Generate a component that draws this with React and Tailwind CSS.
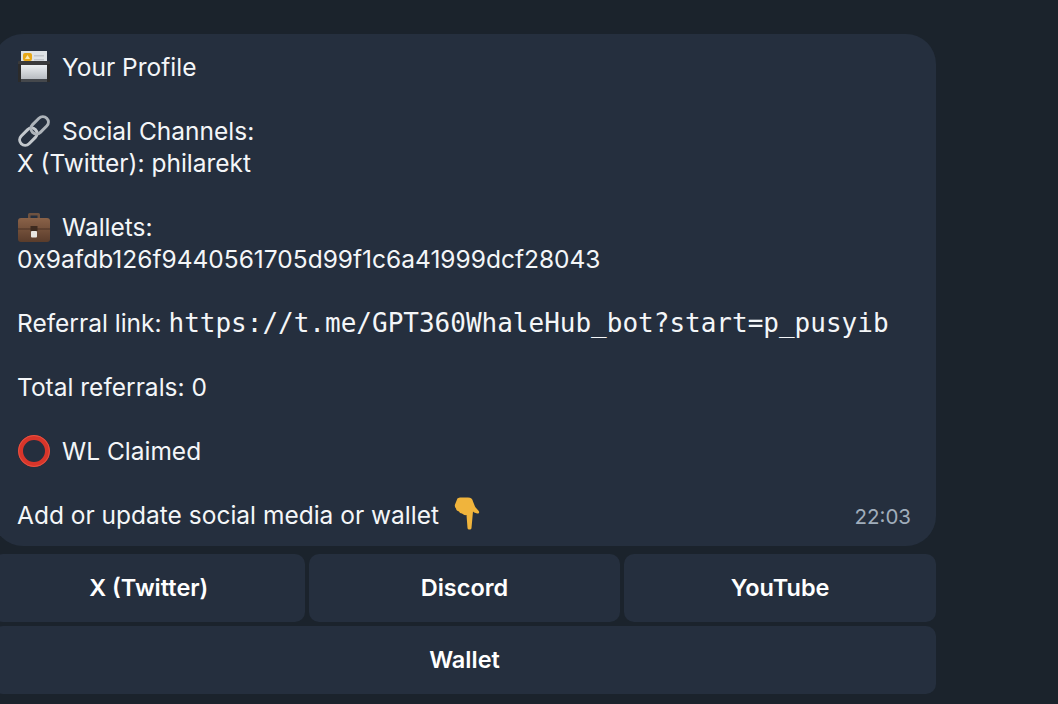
import React from "react";

const PrinterEmoji = () => (
  <svg width="34" height="34" viewBox="0 0 34 34" className="shrink-0">
    <defs>
      <linearGradient id="fax" x1="0" y1="0" x2="0" y2="1">
        <stop offset="0" stopColor="#eceff1" />
        <stop offset="1" stopColor="#b4b8bd" />
      </linearGradient>
    </defs>
    <rect x="4" y="1" width="26" height="14" fill="#dfe3e6" />
    <rect x="6" y="3" width="9" height="8" rx="2" fill="#e8a818" />
    <path d="M8 9l2.5-4 2.5 4z" fill="#fbe9b0" />
    <rect x="17" y="5" width="10" height="1.5" fill="#c2c6ca" />
    <rect x="17" y="9" width="10" height="1.5" fill="#c2c6ca" />
    <rect x="1" y="11" width="32" height="4" rx="1" fill="#3a3a3a" />
    <rect x="3" y="15" width="28" height="15" fill="url(#fax)" />
    <rect x="3" y="29" width="28" height="3" fill="#45484c" />
    <rect x="1" y="14" width="3" height="18" fill="#2b2b2b" />
    <rect x="30" y="14" width="3" height="18" fill="#2b2b2b" />
  </svg>
);

const LinkEmoji = () => (
  <svg width="34" height="34" viewBox="0 0 34 34" fill="none" className="shrink-0">
    <g transform="rotate(-45 17 17)" stroke="#aeb4ba" strokeWidth="3">
      <rect x="-1" y="11.5" width="20" height="11" rx="5.5" stroke="#c3c8cd" />
      <rect x="15" y="11.5" width="20" height="11" rx="5.5" />
    </g>
  </svg>
);

const BriefcaseEmoji = () => (
  <svg width="34" height="34" viewBox="0 0 34 34" className="shrink-0">
    <defs>
      <linearGradient id="case" x1="0" y1="0" x2="0" y2="1">
        <stop offset="0" stopColor="#8a6248" />
        <stop offset="1" stopColor="#5a3c2b" />
      </linearGradient>
    </defs>
    <path d="M11 8V4.5A1.5 1.5 0 0 1 12.5 3h9A1.5 1.5 0 0 1 23 4.5V8h-2.5V5.5h-7V8z" fill="#6e5240" />
    <rect x="1" y="8" width="32" height="24" rx="3" fill="url(#case)" />
    <path d="M1 19h32" stroke="#4a3124" strokeWidth="1" />
    <rect x="13.5" y="16" width="7" height="5" fill="#3d2a1f" />
    <rect x="14" y="21" width="6" height="6.5" rx="1" fill="#e9e6e1" />
  </svg>
);

const CircleEmoji = () => (
  <svg width="34" height="34" viewBox="0 0 34 34" fill="none" className="shrink-0">
    <circle cx="17" cy="17" r="13.5" stroke="#d8352a" strokeWidth="5" />
    <circle cx="17" cy="17" r="15.5" stroke="#e85a48" strokeWidth="0.8" />
  </svg>
);

const HandEmoji = () => (
  <svg width="28" height="34" viewBox="0 0 28 34" className="shrink-0">
    <path
      d="M4 2.5C4 1 6 .5 9 .5h6c3 0 4.500 1.500 5 4l2 5c1 2 3 3 4 5 .6 1.300-.5 2.500-2 2-1.500-.5-3-1-4-2l-1.500 16.500c-.2 2-3.800 2-4 0L13.500 18c-2 .5-3.500-.5-4.500-1.500-1.500 0-2.500-1-3-2C4.500 14 3 13 3 11.500 2 10.500 1.500 9 2 7.500z"
      fill="#f0b43c"
    />
  </svg>
);

const Line = ({ icon, children }) => (
  <div className="flex h-8 items-center whitespace-nowrap">
    {icon && <span className="mr-[10px] flex w-[35px] justify-start">{icon}</span>}
    <span>{children}</span>
  </div>
);

const KeyButton = ({ label }) => (
  <button className="flex h-[68px] flex-1 items-center justify-center rounded-[10px] bg-[#252f3e] text-[23.5px] font-semibold text-white">
    {label}
  </button>
);

export default function App() {
  return (
    <div className="h-[704px] w-[1058px] overflow-hidden bg-[#1b232c] pt-[34px] font-['Inter',sans-serif] text-white">
      <div className="ml-[-7px] w-[943px]">
        <div className="relative rounded-[30px] bg-[#252f3e] pb-[15px] pl-6 pt-[17px] text-[24.5px] leading-8 text-[#f4f6f8]">
          <Line icon={<PrinterEmoji />}>Your Profile</Line>
          <div className="h-8" />
          <Line icon={<LinkEmoji />}>Social Channels:</Line>
          <Line>X (Twitter): philarekt</Line>
          <div className="h-8" />
          <Line icon={<BriefcaseEmoji />}>Wallets:</Line>
          <Line>0x9afdb126f9440561705d99f1c6a41999dcf28043</Line>
          <div className="h-8" />
          <Line>
            Referral link:{" "}
            <span className="font-['DejaVu_Sans_Mono',monospace] text-[26px]">
              https://t.me/GPT360WhaleHub_bot?start=p_pusyib
            </span>
          </Line>
          <div className="h-8" />
          <Line>Total referrals: 0</Line>
          <div className="h-8" />
          <Line icon={<CircleEmoji />}>WL Claimed</Line>
          <div className="h-8" />
          <div className="flex h-8 items-center whitespace-nowrap">
            <span>Add or update social media or wallet</span>
            <span className="ml-[14px] mt-[-2px]">
              <HandEmoji />
            </span>
          </div>
          <span className="absolute bottom-[15px] right-[25px] text-[20.5px] leading-7 text-[#a0adbb]">22:03</span>
        </div>
        <div className="mt-2 flex gap-1">
          <KeyButton label="X (Twitter)" />
          <KeyButton label="Discord" />
          <KeyButton label="YouTube" />
        </div>
        <div className="mt-1 flex">
          <KeyButton label="Wallet" />
        </div>
      </div>
    </div>
  );
}
